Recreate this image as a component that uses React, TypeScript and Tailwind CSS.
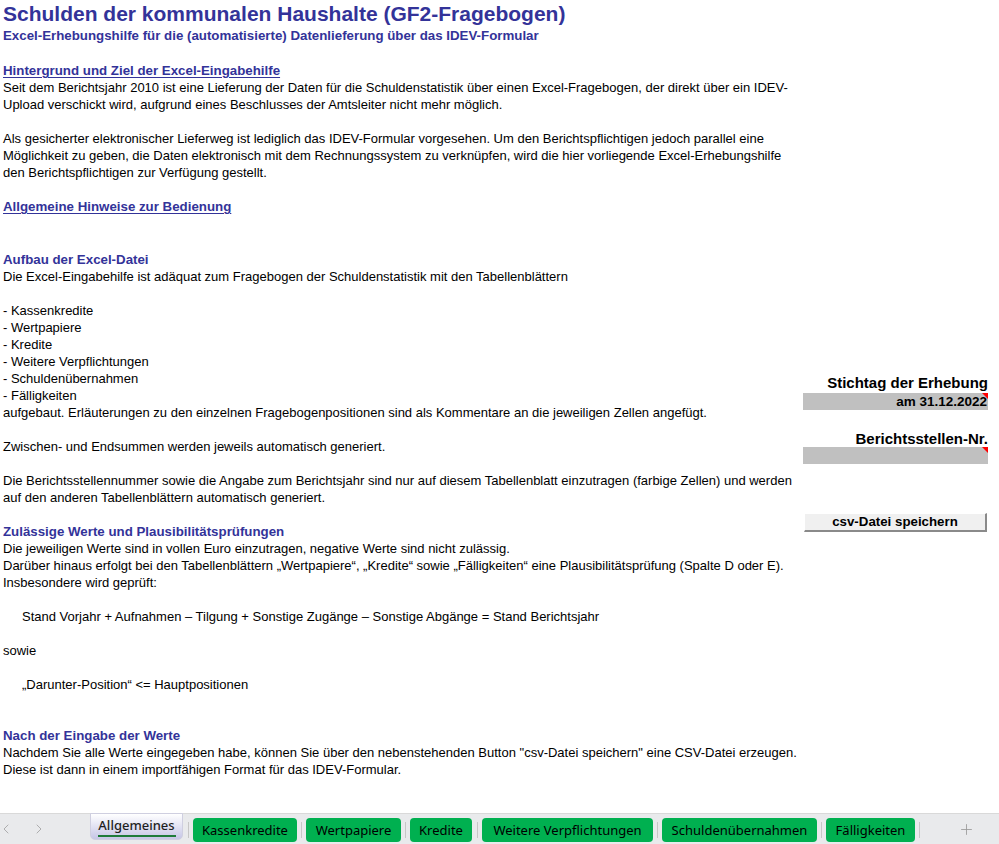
import { ChevronLeft, ChevronRight, Plus } from 'lucide-react';

type Row = { h: number; text?: string; kind?: 'body' | 'head' | 'link'; indent?: boolean };

const ROWS: Row[] = [
  { h: 18 },
  { h: 17, kind: 'link', text: 'Hintergrund und Ziel der Excel-Eingabehilfe' },
  { h: 17, text: 'Seit dem Berichtsjahr 2010 ist eine Lieferung der Daten für die Schuldenstatistik über einen Excel-Fragebogen, der direkt über ein IDEV-' },
  { h: 17, text: 'Upload verschickt wird, aufgrund eines Beschlusses der Amtsleiter nicht mehr möglich.' },
  { h: 17 },
  { h: 17, text: 'Als gesicherter elektronischer Lieferweg ist lediglich das IDEV-Formular vorgesehen. Um den Berichtspflichtigen jedoch parallel eine' },
  { h: 17, text: 'Möglichkeit zu geben, die Daten elektronisch mit dem Rechnungssystem zu verknüpfen, wird die hier vorliegende Excel-Erhebungshilfe' },
  { h: 17, text: 'den Berichtspflichtigen zur Verfügung gestellt.' },
  { h: 17 },
  { h: 17, kind: 'link', text: 'Allgemeine Hinweise zur Bedienung' },
  { h: 18 },
  { h: 18 },
  { h: 17, kind: 'head', text: 'Aufbau der Excel-Datei' },
  { h: 17, text: 'Die Excel-Eingabehilfe ist adäquat zum Fragebogen der Schuldenstatistik mit den Tabellenblättern' },
  { h: 17 },
  { h: 17, text: '- Kassenkredite' },
  { h: 17, text: '- Wertpapiere' },
  { h: 17, text: '- Kredite' },
  { h: 17, text: '- Weitere Verpflichtungen' },
  { h: 17, text: '- Schuldenübernahmen' },
  { h: 17, text: '- Fälligkeiten' },
  { h: 17, text: 'aufgebaut. Erläuterungen zu den einzelnen Fragebogenpositionen sind als Kommentare an die jeweiligen Zellen angefügt.' },
  { h: 17 },
  { h: 17, text: 'Zwischen- und Endsummen werden jeweils automatisch generiert.' },
  { h: 17 },
  { h: 17, text: 'Die Berichtsstellennummer sowie die Angabe zum Berichtsjahr sind nur auf diesem Tabellenblatt einzutragen (farbige Zellen) und werden' },
  { h: 17, text: 'auf den anderen Tabellenblättern automatisch generiert.' },
  { h: 17 },
  { h: 17, kind: 'head', text: 'Zulässige Werte und Plausibilitätsprüfungen' },
  { h: 17, text: 'Die jeweiligen Werte sind in vollen Euro einzutragen, negative Werte sind nicht zulässig.' },
  { h: 17, text: 'Darüber hinaus erfolgt bei den Tabellenblättern „Wertpapiere“, „Kredite“ sowie „Fälligkeiten“ eine Plausibilitätsprüfung (Spalte D oder E).' },
  { h: 17, text: 'Insbesondere wird geprüft:' },
  { h: 17 },
  { h: 17, indent: true, text: 'Stand Vorjahr + Aufnahmen – Tilgung + Sonstige Zugänge – Sonstige Abgänge = Stand Berichtsjahr' },
  { h: 17 },
  { h: 17, text: 'sowie' },
  { h: 17 },
  { h: 17, indent: true, text: '„Darunter-Position“ <= Hauptpositionen' },
  { h: 17 },
  { h: 17 },
  { h: 17, kind: 'head', text: 'Nach der Eingabe der Werte' },
  { h: 17, text: 'Nachdem Sie alle Werte eingegeben habe, können Sie über den nebenstehenden Button "csv-Datei speichern" eine CSV-Datei erzeugen.' },
  { h: 17, text: 'Diese ist dann in einem importfähigen Format für das IDEV-Formular.' },
];

const TABS: { name: string; w: string }[] = [
  { name: 'Kassenkredite', w: 'w-[104px]' },
  { name: 'Wertpapiere', w: 'w-[95px]' },
  { name: 'Kredite', w: 'w-[62px]' },
  { name: 'Weitere Verpflichtungen', w: 'w-[171px]' },
  { name: 'Schuldenübernahmen', w: 'w-[155px]' },
  { name: 'Fälligkeiten', w: 'w-[89px]' },
];

function Separator({ wide }: { wide?: boolean }) {
  return (
    <div className={`${wide ? 'w-[10px]' : 'w-[9px]'} flex justify-center shrink-0 mt-[8px]`}>
      <div className="w-px h-[16px] bg-[#c6c6c6]" />
    </div>
  );
}

function GrayCell({ children }: { children?: React.ReactNode }) {
  return (
    <div className="relative h-[17px] bg-[#c0c0c0] flex items-center justify-end pr-[1px] text-[13.5px] font-bold leading-[17px] text-black whitespace-nowrap">
      {children}
      {/* comment marker */}
      <div className="absolute top-0 right-0 w-0 h-0 border-t-[6px] border-t-[#ff0000] border-l-[6px] border-l-transparent" />
    </div>
  );
}

export default function App() {
  return (
    <div className="h-[844px] w-full flex flex-col bg-white overflow-hidden font-['Liberation_Sans',Arial,sans-serif]">
      {/* Sheet */}
      <div className="flex-1 flex">
        <div className="w-[800px] shrink-0 pl-[3px]">
          <div className="h-[27px] pt-[1px] text-[21px] leading-[26px] font-bold text-[#333399] whitespace-nowrap">
            Schulden der kommunalen Haushalte (GF2-Fragebogen)
          </div>
          <div className="h-[17px] text-[13.3px] leading-[17px] font-bold text-[#333399] whitespace-nowrap">
            Excel-Erhebungshilfe für die (automatisierte) Datenlieferung über das IDEV-Formular
          </div>
          {ROWS.map((r, i) => (
            <div
              key={i}
              style={{ height: r.h }}
              className={`whitespace-nowrap leading-[17px] ${r.indent ? 'pl-[19px]' : ''} ${
                r.kind === 'head'
                  ? 'text-[13.3px] font-bold text-[#333399]'
                  : r.kind === 'link'
                  ? 'text-[13.3px] font-bold text-[#333399] underline underline-offset-2'
                  : 'text-[13px] text-black'
              }`}
            >
              {r.text}
            </div>
          ))}
        </div>

        {/* Right side fields */}
        <div className="w-[185px] ml-[3px] pt-[372px] flex flex-col">
          <div className="h-[21px] text-right text-[15px] font-bold leading-[21px] text-black whitespace-nowrap">
            Stichtag der Erhebung
          </div>
          <GrayCell>am 31.12.2022</GrayCell>
          <div className="h-[20px]" />
          <div className="h-[17px] text-right text-[15px] font-bold leading-[17px] text-black whitespace-nowrap">
            Berichtsstellen-Nr.
          </div>
          <GrayCell />
          <div className="h-[49px]" />
          <div className="h-[19px] ml-[1px] w-[183px] bg-[#f0f0f0] border-t border-l border-t-white border-l-white border-b-[2px] border-r-[2px] border-b-[#8a8a8a] border-r-[#8a8a8a] flex items-center justify-center text-[13.3px] font-bold text-black whitespace-nowrap">
            csv-Datei speichern
          </div>
        </div>
      </div>

      {/* Sheet tabs */}
      <div className="h-[31px] shrink-0 bg-[#e9eaec] border-t border-[#d9d9d9] flex items-start font-['Noto_Sans','Open_Sans',sans-serif] text-[13px] text-black">
        <div className="w-[90px] h-full flex items-center -ml-[2px] gap-[17px] text-[#a3a3a3]">
          <ChevronLeft size={16} strokeWidth={1.3} />
          <ChevronRight size={16} strokeWidth={1.3} />
        </div>
        <div className="w-[93px] h-[27px] -mt-px ml-[2px] rounded-b-[5px] border border-[#cfcfe0] bg-gradient-to-b from-white to-[#c6c6e6] flex flex-col items-center justify-center">
          <span className="leading-[18px] text-[#1f1f1f] font-medium">Allgemeines</span>
          <div className="w-[78px] h-[2px] bg-[#1e7b3a] mt-[1px]" />
        </div>
        <Separator wide />
        {TABS.map((t, i) => (
          <div key={t.name} className="flex items-start">
            <div className={`${t.w} h-[24px] mt-[4px] rounded-[4px] bg-[#00b050] flex items-center justify-center whitespace-nowrap leading-none`}>
              {t.name}
            </div>
            <Separator wide={i === 2} />
          </div>
        ))}
        <div className="flex-1 h-full flex items-center justify-end pr-[24px] text-[#9a9a9a]">
          <Plus size={17} strokeWidth={1.2} />
        </div>
      </div>
    </div>
  );
}
